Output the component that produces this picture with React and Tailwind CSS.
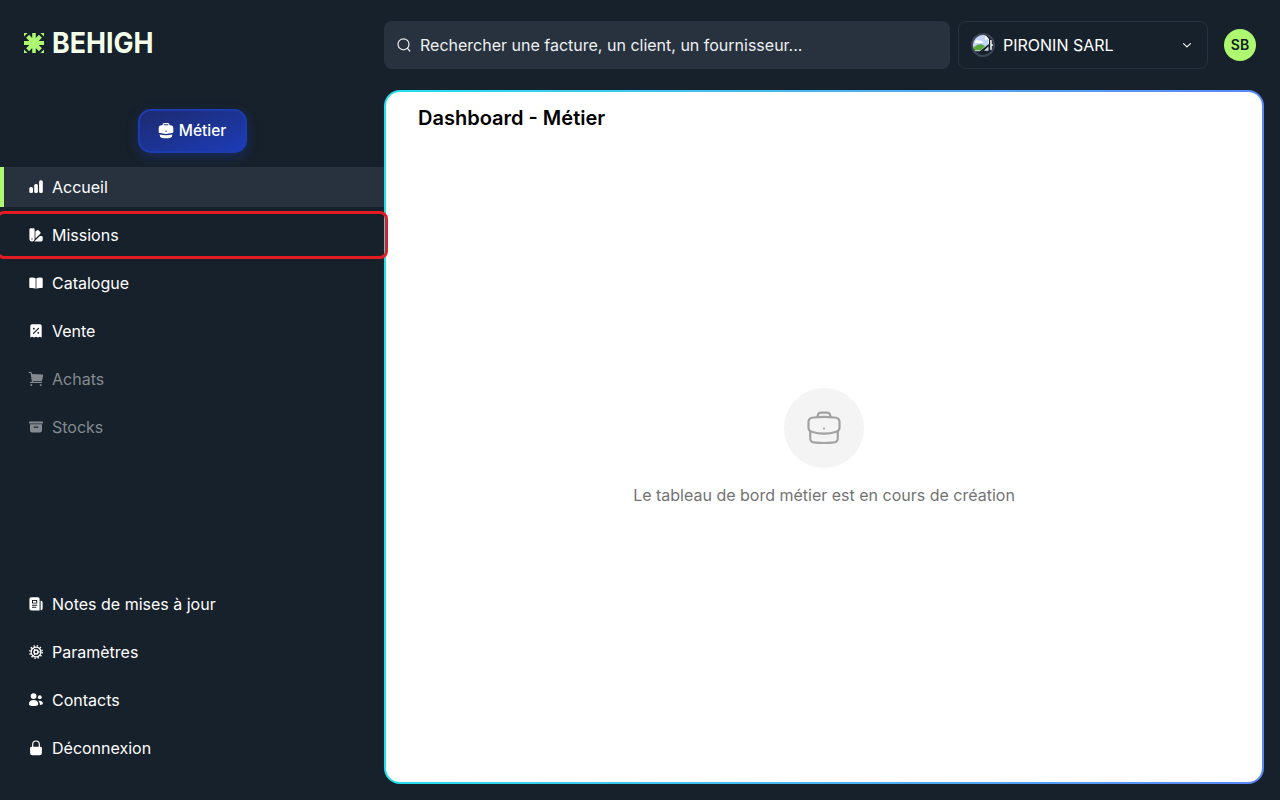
import React from 'react';

function Icon({ children, className = 'size-4' }) {
  return (
    <svg viewBox="0 0 16 16" className={'shrink-0 ' + className} fill="currentColor" aria-hidden="true">
      {children}
    </svg>
  );
}

const icons = {
  home: (
    <>
      <rect x="1.300" y="8" width="3.700" height="6" rx="1.500" />
      <rect x="6.200" y="5" width="3.700" height="9" rx="1.500" />
      <rect x="11.100" y="1.200" width="3.700" height="12.800" rx="1.500" />
    </>
  ),
  missions: (
    <>
      <path fillRule="evenodd" d="M2.800 1.300h2.600A1.200 1.200 0 0 1 6.600 2.500v9.300a2.600 2.600 0 0 1-5.200 0V2.700A1.400 1.400 0 0 1 2.800 1.300Zm1.200 10a.6.6 0 1 0 0 1.200.6.6 0 0 0 0-1.200Z" />
      <path d="M7.400 4.600 9.100 3.300a1.200 1.200 0 0 1 1.600.1l1.600 1.700a1.200 1.200 0 0 1 0 1.600L7.400 11.600Z" />
      <path d="m6.300 14.500 5.600-5.500h1.500a1.300 1.300 0 0 1 1.300 1.300v2.800a1.400 1.400 0 0 1-1.400 1.400Z" />
    </>
  ),
  catalogue: (
    <>
      <path d="M2.200 2.700C4.500 2.300 6.300 2.600 7.600 3.200v10.500c-1.500-.7-3.300-.9-5.400-.6a.8.8 0 0 1-.9-.8V3.700a1 1 0 0 1 .9-1Z" />
      <path d="M13.800 2.700c-2.300-.4-4.100-.1-5.400.5v10.500c1.500-.7 3.300-.9 5.400-.6a.8.8 0 0 0 .9-.8V3.700a1 1 0 0 0-.9-1Z" />
    </>
  ),
  vente: (
    <>
      <path d="M4 1.300h8a1.700 1.700 0 0 1 1.700 1.700v11.500l-1.900-.8-1.900.8-1.900-.8-1.900.8-1.900-.8-1.900.8V3A1.700 1.700 0 0 1 4 1.300Z" />
      <g stroke="#17212b" strokeWidth="1.200" fill="none" strokeLinecap="round">
        <path d="m5.500 10.300 5-5" />
        <path d="M5.800 5.700h.1M10.200 9.800h.1" strokeWidth="1.800" />
      </g>
    </>
  ),
  achats: (
    <>
      <path d="M1.300 1.400h.8c.7 0 1.100.4 1.200 1l1.200 8.700" fill="none" stroke="currentColor" strokeWidth="1.200" strokeLinecap="round" />
      <path d="m3.600 3.100 10.800.5a.8.8 0 0 1 .7 1l-1 5a.9.9 0 0 1-.8.700H4.600Z" />
      <rect x="1.800" y="10.900" width="12.400" height="1.200" rx=".6" />
      <circle cx="3.300" cy="13.900" r="1" />
      <circle cx="12.600" cy="13.900" r="1" />
    </>
  ),
  stocks: (
    <>
      <rect x="1" y="2.400" width="14" height="2" rx=".6" />
      <path fillRule="evenodd" d="M2 5.300h12v6.300a1.800 1.800 0 0 1-1.800 1.800H3.800A1.800 1.800 0 0 1 2 11.600ZM6.200 7.400a.7.7 0 0 0 0 1.400h3.600a.7.7 0 0 0 0-1.400Z" />
    </>
  ),
  notes: (
    <>
      <path fillRule="evenodd" d="M3.300 1.300h6.600A1.700 1.700 0 0 1 11.600 3v11.400H3.300a1.900 1.900 0 0 1-1.900-1.900V3.200a1.900 1.900 0 0 1 1.900-1.900ZM4 4v3.600h5.200V4Zm0 4.700v1h5.200v-1Zm0 2v1h4.200v-1Z" />
      <rect x="5" y="4.900" width="3.200" height="1.800" />
      <path d="M12.600 4.700h.5a1.500 1.500 0 0 1 1.500 1.500V12.500a1.700 1.700 0 0 1-2 1.700Z" />
    </>
  ),
  settings: (
    <g fill="none" stroke="currentColor">
      <circle cx="8" cy="8" r="4.900" strokeWidth="1.300" />
      <circle cx="8" cy="8" r="6.200" strokeWidth="1.500" strokeDasharray="1.400 1.846" />
      <circle cx="8" cy="8" r="2" strokeWidth="1.500" />
      <path d="m6.800 6-1.500-2M6.800 10l-1.500 2M10.300 8H13" strokeWidth="1" />
    </g>
  ),
  contacts: (
    <>
      <circle cx="5.600" cy="4.100" r="2.900" />
      <circle cx="11.800" cy="5.200" r="1.900" />
      <path d="M.9 12.200c0-2.600 2-4.100 4.700-4.100s4.700 1.500 4.700 4.100c0 1.100-1.700 1.900-4.700 1.900s-4.700-.8-4.700-1.900Z" />
      <path d="M10.400 8.900c2.400-.5 4.500.6 4.500 2.600 0 .9-1 1.300-2.900 1.400-.1-1.600-.5-3-1.600-4Z" />
    </>
  ),
  logout: (
    <>
      <path d="M4.700 7.500V4.300a3.300 3.300 0 0 1 6.600 0v3.200" fill="none" stroke="currentColor" strokeWidth="1.200" />
      <path d="M3.300 6.700h9.400a1.200 1.200 0 0 1 1.200 1.200v5a2.300 2.300 0 0 1-2.300 2.300H4.400a2.300 2.300 0 0 1-2.300-2.300v-5a1.200 1.200 0 0 1 1.200-1.200Z" />
    </>
  ),
  work: (
    <>
      <path d="M5 3.200V2.300A1.600 1.600 0 0 1 6.600.7h2.800A1.600 1.600 0 0 1 11 2.300v.9" fill="none" stroke="currentColor" strokeWidth="1.200" />
      <path fillRule="evenodd" d="M3.700 2.200h8.600a3 3 0 0 1 3 3v3.200c0 1-.5 1.500-1.400 1.700-3.800 1.100-8 1.100-11.800 0-.9-.2-1.400-.7-1.400-1.700V5.200a3 3 0 0 1 3-3Zm4.300 5.300a.7.7 0 1 0 0 1.400.7.7 0 0 0 0-1.400Z" />
      <path d="M1.700 11.600c4.200 1 8.400 1 12.600 0-.1 2-.8 3.200-2.400 3.400-2.600.3-5.200.3-7.800 0-1.600-.2-2.300-1.400-2.400-3.400Z" />
    </>
  ),
};

const mainItems = [
  { icon: 'home', label: 'Accueil', active: true },
  { icon: 'missions', label: 'Missions', highlighted: true },
  { icon: 'catalogue', label: 'Catalogue' },
  { icon: 'vente', label: 'Vente' },
  { icon: 'achats', label: 'Achats', disabled: true },
  { icon: 'stocks', label: 'Stocks', disabled: true },
];

const footerItems = [
  { icon: 'notes', label: 'Notes de mises à jour' },
  { icon: 'settings', label: 'Paramètres' },
  { icon: 'contacts', label: 'Contacts' },
  { icon: 'logout', label: 'Déconnexion' },
];

function NavItem({ icon, label, active, highlighted, disabled }) {
  return (
    <a
      className={
        'relative flex h-10 items-center gap-2 border-l-4 pl-6 ' +
        (active ? 'border-[#adf870] bg-[#27323e] ' : 'border-transparent ') +
        (disabled ? 'text-[#848a90]' : 'text-white')
      }
    >
      <Icon>{icons[icon]}</Icon>
      <span>{label}</span>
      {highlighted && (
        <span className="pointer-events-none absolute -top-1 -right-1 -bottom-1 -left-2 z-10 rounded-lg border-3 border-[#e41b22]" />
      )}
    </a>
  );
}

function Logo() {
  return (
    <div className="flex h-[22px] items-center gap-[9px]">
      <svg viewBox="0 0 20 22" className="h-[22px] w-5 shrink-0" fill="#adf870" aria-hidden="true">
        <path d="M0 1h3.600L0 4.600ZM20 1h-3.600L20 4.600ZM0 21h3.600L0 17.400ZM20 21h-3.600L20 17.400Z" />
        <path d="M8.200 1h3.600v5L14.900 2.800l3 3L14.700 9H20v4h-5.300l3.200 3.200-3 3-3.100-3.100V21H8.200v-4.900l-3.100 3.100-3-3L5.300 13H0V9h5.300L2.100 5.800l3-3L8.200 6Z" />
      </svg>
      <svg viewBox="0 0 100 22" className="h-[22px] w-[100px] overflow-visible" role="img" aria-label="BEHIGH">
        <text x="-1" y="21" textLength="101.500" lengthAdjust="spacingAndGlyphs" className="fill-[#f3ffe8] font-['Inter'] text-[28.500px] font-bold">BEHIGH</text>
      </svg>
    </div>
  );
}

function BrokenImage() {
  return (
    <svg viewBox="0 0 24 24" className="size-6 shrink-0" aria-hidden="true">
      <defs>
        <clipPath id="company-avatar"><circle cx="12" cy="12" r="10.500" /></clipPath>
      </defs>
      <g clipPath="url(#company-avatar)">
        <path d="M2 2h12l4 4v5L9 18H2Z" fill="#c3d5fa" />
        <path d="M4 9.500c0-2.500 3-3.500 4-1.500 2-1 4 0 4 2H4Z" fill="#fff" />
        <path d="M2 18v-3c4-4 8-5 12-2l-5 5Z" fill="#58a83a" />
        <path d="M2.500 2v16M2 2.500h12l3.500 4V11" fill="none" stroke="#e8eaed" strokeWidth="1" />
        <path d="M2 17.300h7v1H2ZM13 17.800l4.500-4.500v4.500Z" fill="#d7dce3" />
        <path d="M14 2v4.500h4Z" fill="#fff" />
        <path d="M20 7v10M20 12h3" stroke="#fff" strokeWidth="1.500" />
      </g>
      <circle cx="12" cy="12" r="11" fill="none" stroke="#3b4556" strokeWidth="2" />
    </svg>
  );
}

export default function App() {
  return (
    <div className="flex h-screen w-screen overflow-hidden bg-[#17212b] font-['Inter',sans-serif] text-base text-white">
      <aside className="z-10 flex w-96 shrink-0 flex-col pt-8 pb-8">
        <div className="pl-6">
          <Logo />
        </div>
        <div className="mt-[54.500px] flex justify-center">
          <button className="flex h-11 w-[109px] items-center justify-center gap-[5px] rounded-[13px] border-2 border-[#1d3cb0] bg-linear-to-br from-[#1c2a70] to-[#1c3cb8] text-[15.500px] font-medium shadow-[0_4px_12px_rgba(29,61,190,0.35)]">
            <Icon>{icons.work}</Icon>
            Métier
          </button>
        </div>
        <nav className="mt-[14.700px] flex flex-col gap-2">
          {mainItems.map((item) => <NavItem key={item.label} {...item} />)}
        </nav>
        <nav className="mt-auto flex flex-col gap-2">
          {footerItems.map((item) => <NavItem key={item.label} {...item} />)}
        </nav>
      </aside>

      <div className="flex min-w-0 flex-1 flex-col pt-[21px] pr-4 pb-4">
        <header className="flex h-12 shrink-0 items-center">
          <div className="flex h-12 w-[566px] items-center gap-2 rounded-lg bg-[#27323e] px-3 text-[#eff0f1]">
            <svg viewBox="0 0 16 16" className="size-4 shrink-0" fill="none" stroke="currentColor" strokeWidth="1.200" strokeLinecap="round">
              <circle cx="7.500" cy="7.300" r="5.500" />
              <path d="m11.500 11.300 2.300 2.700" />
            </svg>
            <span>Rechercher une facture, un client, un fournisseur...</span>
          </div>
          <div className="ml-2 flex h-12 w-[250px] items-center gap-2 rounded-lg border border-[#27323e] px-3">
            <BrokenImage />
            <span className="flex-1">PIRONIN SARL</span>
            <svg viewBox="0 0 16 16" className="size-4" fill="none" stroke="currentColor" strokeWidth="1.100" strokeLinecap="round" strokeLinejoin="round">
              <path d="m4.500 6.700 3.500 3.200 3.500-3.200" />
            </svg>
          </div>
          <div className="ml-4 flex size-8 items-center justify-center rounded-full bg-[#adf870] text-sm font-semibold text-[#101820]">SB</div>
        </header>

        <div className="mt-[21px] flex min-h-0 flex-1 rounded-2xl bg-linear-to-r from-[#22dfea] to-[#5b87f8] p-0.5">
          <main className="flex flex-1 flex-col rounded-[14px] bg-white">
            <h1 className="px-8 pt-3 text-xl leading-7 font-semibold text-black">Dashboard - Métier</h1>
            <div className="flex flex-1 flex-col items-center pt-64">
              <div className="flex size-20 items-center justify-center rounded-full bg-[#f4f4f4]">
                <svg viewBox="0 0 40 40" className="size-10" fill="none" stroke="#a2a2a2" strokeWidth="2.200" strokeLinecap="round" strokeLinejoin="round">
                  <path d="M13.500 8.800c.2-2.800 1.400-4.200 3.800-4.200h5.400c2.400 0 3.600 1.400 3.800 4.200" />
                  <path d="M9.500 9.500c7-.7 14-.7 21 0 3.500.3 5 1.500 5 4.300v6c0 2.100-1 3.300-3.100 3.900-8.200 2.600-16.600 2.600-24.800 0-2.100-.6-3.100-1.800-3.100-3.900v-6c0-2.800 1.500-4 5-4.300Z" />
                  <path d="M6.200 24v6.200c0 2.500 1 3.800 3.700 4.200 6.700.8 13.500.8 20.200 0 2.700-.4 3.700-1.700 3.700-4.200V24M20 20.500v.1" />
                </svg>
              </div>
              <p className="mt-[15px] text-[#737373]">Le tableau de bord métier est en cours de création</p>
            </div>
          </main>
        </div>
      </div>
    </div>
  );
}
